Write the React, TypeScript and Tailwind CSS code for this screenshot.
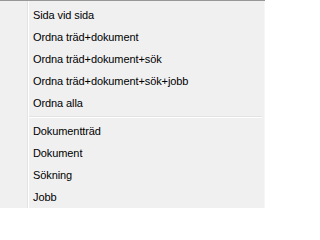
import React from "react";

const top = ["Sida vid sida", "Ordna träd+dokument", "Ordna träd+dokument+sök", "Ordna träd+dokument+sök+jobb", "Ordna alla"];
const bottom = ["Dokumentträd", "Dokument", "Sökning", "Jobb"];

export default function App() {
  return (
    <div className="w-[265px] h-[208px] overflow-hidden bg-[#f0f0f0] border-t border-[#979797] flex text-[11px] text-black tracking-[-0.1px]" style={{ fontFamily: '"Liberation Sans", Arial, sans-serif' }}>
      <div className="w-[27px] shrink-0" />
      <div className="w-px bg-[#e2e3e3] shrink-0" />
      <div className="w-px bg-white shrink-0" />
      <div className="flex-1 flex flex-col pt-[3px] pr-[2px]">
        {top.map((t) => (
          <div key={t} className="h-[22px] leading-[22px] pl-[4px] whitespace-nowrap">{t}</div>
        ))}
        <div className="h-[7px] flex flex-col justify-center">
          <div className="h-px bg-[#e2e3e3]" />
          <div className="h-px bg-white" />
        </div>
        {bottom.map((t) => (
          <div key={t} className="h-[22px] leading-[22px] pl-[4px] whitespace-nowrap">{t}</div>
        ))}
      </div>
      <div className="w-px bg-[#f7f7f7] shrink-0" />
    </div>
  );
}
